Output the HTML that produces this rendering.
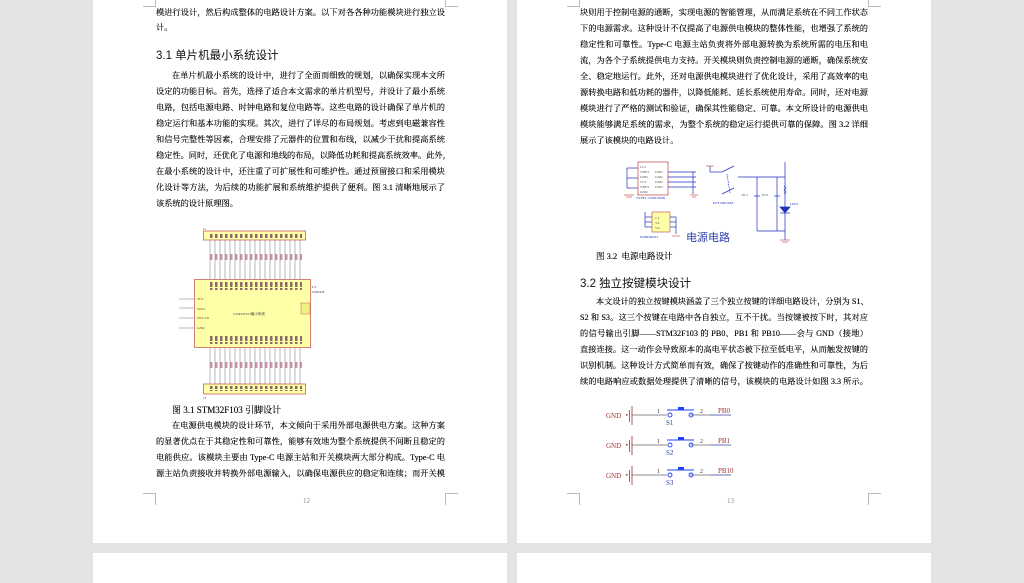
<!DOCTYPE html>
<html><head><meta charset="utf-8">
<style>
*{margin:0;padding:0;box-sizing:border-box}
body{width:1024px;height:575px;background:#e4e4e4;position:relative;overflow:hidden;font-family:"Liberation Serif","Noto Serif CJK SC",serif;color:#111}
.pg{position:absolute;background:#fff}
.l{position:absolute;font-size:8.2px;line-height:12px;white-space:nowrap;text-align:justify;text-align-last:justify;color:#111;text-shadow:0 0 0.3px #000}
.s{text-align-last:left}
.h{position:absolute;font-size:11.5px;font-family:"Liberation Sans","Noto Sans CJK SC",sans-serif;color:#111;white-space:nowrap}
.c{position:absolute;width:13px;height:12px;border-color:#bbb;border-style:solid;border-width:0}
.pn{position:absolute;font-size:7px;color:#888}
</style></head><body>
<div class="pg" style="left:93px;top:0;width:414px;height:543px"></div>
<div class="pg" style="left:517px;top:0;width:414px;height:543px"></div>
<div class="pg" style="left:93px;top:553px;width:414px;height:30px"></div>
<div class="pg" style="left:517px;top:553px;width:414px;height:30px"></div>

<div class="c" style="left:143px;top:-5px;border-right-width:1px;border-bottom-width:1px"></div>
<div class="c" style="left:445px;top:-5px;border-left-width:1px;border-bottom-width:1px"></div>
<div class="c" style="left:143px;top:493px;border-right-width:1px;border-top-width:1px"></div>
<div class="c" style="left:445px;top:493px;border-left-width:1px;border-top-width:1px"></div>
<div class="pn" style="left:303px;top:497px">12</div>
<div class="c" style="left:567px;top:-5px;border-right-width:1px;border-bottom-width:1px"></div>
<div class="c" style="left:868px;top:-5px;border-left-width:1px;border-bottom-width:1px"></div>
<div class="c" style="left:567px;top:493px;border-right-width:1px;border-top-width:1px"></div>
<div class="c" style="left:868px;top:493px;border-left-width:1px;border-top-width:1px"></div>
<div class="pn" style="left:727px;top:497px">13</div>

<div class="l" style="left:156px;top:7px;width:289px">模进行设计，然后构成整体的电路设计方案。以下对各各种功能模块进行独立设</div>
<div class="l s" style="left:156px;top:22px;width:289px">计。</div>
<div class="h" style="left:156px;top:47px">3.1 单片机最小系统设计</div>
<div class="l" style="left:172px;top:70px;width:273px">在单片机最小系统的设计中，进行了全面而细致的规划，以确保实现本文所</div>
<div class="l" style="left:156px;top:86px;width:289px">设定的功能目标。首先，选择了适合本文需求的单片机型号，并设计了最小系统</div>
<div class="l" style="left:156px;top:102px;width:289px">电路，包括电源电路、时钟电路和复位电路等。这些电路的设计确保了单片机的</div>
<div class="l" style="left:156px;top:118px;width:289px">稳定运行和基本功能的实现。其次，进行了详尽的布局规划。考虑到电磁兼容性</div>
<div class="l" style="left:156px;top:134px;width:289px">和信号完整性等因素，合理安排了元器件的位置和布线，以减少干扰和提高系统</div>
<div class="l" style="left:156px;top:150px;width:289px">稳定性。同时，还优化了电源和地线的布局，以降低功耗和提高系统效率。此外，</div>
<div class="l" style="left:156px;top:166px;width:289px">在最小系统的设计中，还注重了可扩展性和可维护性。通过预留接口和采用模块</div>
<div class="l" style="left:156px;top:182px;width:289px">化设计等方法，为后续的功能扩展和系统维护提供了便利。图 3.1 清晰地展示了</div>
<div class="l s" style="left:156px;top:198px;width:289px">该系统的设计原理图。</div>

<svg style="position:absolute;left:175px;top:226px" width="150" height="175" viewBox="175 226 150 175">
 <g stroke="#888" stroke-width="0.6">
  <g id="vl">
  <line x1="210" y1="240" x2="210" y2="279"/><line x1="215" y1="240" x2="215" y2="279"/><line x1="220" y1="240" x2="220" y2="279"/><line x1="225" y1="240" x2="225" y2="279"/><line x1="230" y1="240" x2="230" y2="279"/><line x1="235" y1="240" x2="235" y2="279"/><line x1="240" y1="240" x2="240" y2="279"/><line x1="245" y1="240" x2="245" y2="279"/><line x1="250" y1="240" x2="250" y2="279"/><line x1="255" y1="240" x2="255" y2="279"/><line x1="260" y1="240" x2="260" y2="279"/><line x1="265" y1="240" x2="265" y2="279"/><line x1="270" y1="240" x2="270" y2="279"/><line x1="275" y1="240" x2="275" y2="279"/><line x1="280" y1="240" x2="280" y2="279"/><line x1="285" y1="240" x2="285" y2="279"/><line x1="290" y1="240" x2="290" y2="279"/><line x1="295" y1="240" x2="295" y2="279"/><line x1="300" y1="240" x2="300" y2="279"/>
  </g>
  <use href="#vl" transform="translate(0,107)"/>
  <line x1="179" y1="299" x2="194" y2="299"/><line x1="179" y1="308" x2="194" y2="308"/><line x1="179" y1="318" x2="194" y2="318"/><line x1="179" y1="328" x2="194" y2="328"/>
 </g>
 <defs><pattern id="p" width="5" height="6" patternUnits="userSpaceOnUse"><rect width="2.5" height="6" fill="#b06a8a"/></pattern>
 <pattern id="q" width="5" height="6" patternUnits="userSpaceOnUse"><rect width="2.5" height="5" fill="#8a6a6a"/></pattern></defs>
 <rect x="208" y="254" width="94" height="6" fill="url(#p)" opacity="0.7"/>
 <rect x="208" y="362" width="94" height="6" fill="url(#p)" opacity="0.7"/>
 <rect x="203.5" y="231" width="102" height="9" fill="#ffffa8" stroke="#c86060" stroke-width="0.8"/>
 <rect x="208" y="233" width="94" height="5" fill="url(#q)"/>
 <rect x="194.5" y="279.5" width="116" height="68" fill="#ffffa8" stroke="#c86060" stroke-width="0.8"/>
 <rect x="208" y="282" width="94" height="8" fill="url(#q)"/>
 <rect x="208" y="336" width="94" height="8" fill="url(#q)"/>
 <rect x="301" y="303" width="9" height="11" fill="#f0f080" stroke="#c86060" stroke-width="0.5"/>
 <rect x="203.5" y="384" width="102" height="10" fill="#ffffa8" stroke="#c86060" stroke-width="0.8"/>
 <rect x="208" y="386" width="94" height="5" fill="url(#q)"/>
 <g font-size="3.5" fill="#444" font-family="Liberation Serif">
  <text x="197" y="300">3V3</text><text x="197" y="310">SWO</text><text x="197" y="319">SWCLK</text><text x="197" y="329">GND</text>
  <text x="233" y="315">STM32F103最小系统</text>
  <text x="312" y="288" fill="#335">U1</text><text x="312" y="293" fill="#335">STM32F103</text>
  <text x="203" y="230">J1</text><text x="203" y="399">J3</text>
 </g>
</svg>
<div class="l s" style="left:172px;top:404px;font-size:9px">图 3.1 STM32F103 引脚设计</div>
<div class="l" style="left:172px;top:420px;width:273px">在电源供电模块的设计环节，本文倾向于采用外部电源供电方案。这种方案</div>
<div class="l" style="left:156px;top:436px;width:289px">的显著优点在于其稳定性和可靠性，能够有效地为整个系统提供不间断且稳定的</div>
<div class="l" style="left:156px;top:452px;width:289px">电能供应。该模块主要由 Type-C 电源主站和开关模块两大部分构成。Type-C 电</div>
<div class="l" style="left:156px;top:468px;width:289px">源主站负责接收并转换外部电源输入，以确保电源供应的稳定和连续；而开关模</div>

<div class="l" style="left:580px;top:7px;width:288px">块则用于控制电源的通断，实现电源的智能管理，从而满足系统在不同工作状态</div>
<div class="l" style="left:580px;top:23px;width:288px">下的电源需求。这种设计不仅提高了电源供电模块的整体性能，也增强了系统的</div>
<div class="l" style="left:580px;top:39px;width:288px">稳定性和可靠性。Type-C 电源主站负责将外部电源转换为系统所需的电压和电</div>
<div class="l" style="left:580px;top:55px;width:288px">流，为各个子系统提供电力支持。开关模块则负责控制电源的通断，确保系统安</div>
<div class="l" style="left:580px;top:71px;width:288px">全、稳定地运行。此外，还对电源供电模块进行了优化设计，采用了高效率的电</div>
<div class="l" style="left:580px;top:87px;width:288px">源转换电路和低功耗的器件，以降低能耗、延长系统使用寿命。同时，还对电源</div>
<div class="l" style="left:580px;top:103px;width:288px">模块进行了严格的测试和验证，确保其性能稳定、可靠。本文所设计的电源供电</div>
<div class="l" style="left:580px;top:119px;width:288px">模块能够满足系统的需求，为整个系统的稳定运行提供可靠的保障。图 3.2 详细</div>
<div class="l s" style="left:580px;top:135px;width:288px">展示了该模块的电路设计。</div>

<svg style="position:absolute;left:615px;top:155px" width="190" height="90" viewBox="615 155 190 90">
 <g stroke="#2030c0" stroke-width="0.7" fill="none">
  <rect x="638" y="162" width="30" height="33" stroke="#c04040" fill="#fff"/>
  <line x1="627" y1="168" x2="627" y2="188"/><line x1="627" y1="168" x2="638" y2="168"/><line x1="627" y1="178" x2="638" y2="178"/><line x1="627" y1="188" x2="638" y2="188"/>
  <line x1="668" y1="172" x2="696" y2="172"/><line x1="668" y1="177" x2="696" y2="177"/><line x1="668" y1="182" x2="696" y2="182"/><line x1="668" y1="187" x2="696" y2="187"/>
  <line x1="693" y1="172" x2="693" y2="194"/>
  <line x1="710" y1="166" x2="710" y2="172"/><line x1="710" y1="172" x2="722" y2="172"/>
  <line x1="722" y1="172" x2="734" y2="166"/>
  <line x1="738" y1="177" x2="785" y2="177"/>
  <line x1="727" y1="174" x2="730" y2="193" stroke-dasharray="1.5 1"/>
  <line x1="722" y1="194" x2="734" y2="188"/>
  <line x1="757" y1="177" x2="757" y2="231"/><line x1="777" y1="177" x2="777" y2="231"/><line x1="757" y1="231" x2="785" y2="231"/>
  <line x1="785" y1="162" x2="785" y2="240"/>
  <polygon points="780,207 790,207 785,213" fill="#2030c0"/>
  <line x1="780" y1="213" x2="790" y2="213"/>
  <path d="M784 186 l2 2 l-2 2 l2 2 l-2 2"/>
  <line x1="754" y1="196" x2="760" y2="196"/><line x1="774" y1="196" x2="780" y2="196"/>
  <rect x="652" y="212" width="18" height="20" fill="#ffffa8" stroke="#c06060"/>
  <line x1="645" y1="217" x2="652" y2="217"/><line x1="645" y1="222" x2="652" y2="222"/><line x1="645" y1="227" x2="652" y2="227"/><line x1="645" y1="212" x2="645" y2="227"/>
  <line x1="670" y1="217" x2="676" y2="217"/><line x1="670" y1="222" x2="676" y2="222"/><line x1="670" y1="227" x2="676" y2="227"/><line x1="676" y1="217" x2="676" y2="234"/>
 </g>
 <g stroke="#c04040" stroke-width="0.6">
  <line x1="624" y1="195" x2="634" y2="195"/><line x1="626" y1="197" x2="632" y2="197"/>
  <line x1="690" y1="195" x2="698" y2="195"/><line x1="692" y1="197" x2="696" y2="197"/>
  <line x1="780" y1="240" x2="790" y2="240"/><line x1="782" y1="242" x2="788" y2="242"/>
  <line x1="672" y1="236" x2="680" y2="236"/>
  <line x1="706" y1="166" x2="714" y2="166"/>
 </g>
 <g font-size="3.5" fill="#444" font-family="Liberation Serif">
  <text x="640" y="168">CC1</text><text x="640" y="173">VBUS</text><text x="640" y="178">GND</text><text x="640" y="183">CC2</text><text x="640" y="188">VBUS</text><text x="640" y="193">GND</text>
  <text x="655" y="173">GND</text><text x="655" y="178">GND</text><text x="655" y="183">GND</text><text x="655" y="188">GND</text>
  <text x="636" y="199" fill="#2030c0">TYPEC-2S0D-B2P6</text>
  <text x="655" y="219">1 2</text><text x="655" y="224">3 4</text><text x="655" y="229">5 6</text>
  <text x="640" y="238" fill="#2030c0">PinHDR2X3</text>
  <text x="713" y="204" fill="#2030c0">KFT DIP-8X8</text>
  <text x="790" y="205" fill="#2030c0">LED1</text>
  <text x="742" y="196">EC1</text><text x="762" y="196">EC2</text>
</g>
 <text x="686" y="241" font-size="11" fill="#3040b0" font-family="Noto Sans CJK SC,sans-serif">电源电路</text>
</svg>
<div class="l s" style="left:596px;top:250px;font-size:8.5px">图 3.2&nbsp; 电源电路设计</div>

<div class="h" style="left:580px;top:275px">3.2 独立按键模块设计</div>
<div class="l" style="left:596px;top:296px;width:272px">本文设计的独立按键模块涵盖了三个独立按键的详细电路设计，分别为 S1、</div>
<div class="l" style="left:580px;top:312px;width:288px">S2 和 S3。这三个按键在电路中各自独立，互不干扰。当按键被按下时，其对应</div>
<div class="l" style="left:580px;top:328px;width:288px">的信号输出引脚——STM32F103 的 PB0、PB1 和 PB10——会与 GND（接地）</div>
<div class="l" style="left:580px;top:344px;width:288px">直接连接。这一动作会导致原本的高电平状态被下拉至低电平，从而触发按键的</div>
<div class="l" style="left:580px;top:360px;width:288px">识别机制。这种设计方式简单而有效，确保了按键动作的准确性和可靠性，为后</div>
<div class="l" style="left:580px;top:376px;width:288px">续的电路响应或数据处理提供了清晰的信号，该模块的电路设计如图 3.3 所示。</div>

<svg style="position:absolute;left:600px;top:400px" width="150" height="90" viewBox="600 400 150 90">
 <g id="btn">
  <text x="606" y="418" font-size="7" fill="#a03030" font-family="Liberation Serif">GND</text>
  <rect x="626" y="414" width="1.5" height="1.5" fill="#a03030"/>
  <line x1="629.5" y1="410" x2="629.5" y2="422" stroke="#a03030" stroke-width="0.8"/>
  <line x1="632" y1="406" x2="632" y2="425" stroke="#a03030" stroke-width="0.8"/>
  <line x1="632" y1="415" x2="667" y2="415" stroke="#666" stroke-width="0.7"/>
  <line x1="690" y1="415" x2="710" y2="415" stroke="#666" stroke-width="0.7"/>
  <line x1="710" y1="415" x2="731" y2="415" stroke="#3040a0" stroke-width="0.7"/>
  <circle cx="670" cy="415" r="2" fill="none" stroke="#2040ff" stroke-width="0.9"/>
  <circle cx="691" cy="415" r="2" fill="none" stroke="#2040ff" stroke-width="0.9"/>
  <line x1="667" y1="410" x2="694" y2="410" stroke="#2040ff" stroke-width="1"/>
  <rect x="678" y="407" width="6" height="2.5" fill="#2040ff"/>
  <text x="657" y="413" font-size="6" fill="#333" font-family="Liberation Serif">1</text>
  <text x="700" y="413" font-size="6" fill="#333" font-family="Liberation Serif">2</text>
 </g>
 <use href="#btn" transform="translate(0,30)"/>
 <use href="#btn" transform="translate(0,60)"/>
 <g font-size="7" font-family="Liberation Serif">
  <text x="718" y="413" fill="#a03030">PB0</text><text x="718" y="443" fill="#a03030">PB1</text><text x="718" y="473" fill="#a03030">PB10</text>
  <text x="666" y="425" fill="#3040a0">S1</text><text x="666" y="455" fill="#3040a0">S2</text><text x="666" y="485" fill="#3040a0">S3</text>
 </g>
</svg>
</body></html>
